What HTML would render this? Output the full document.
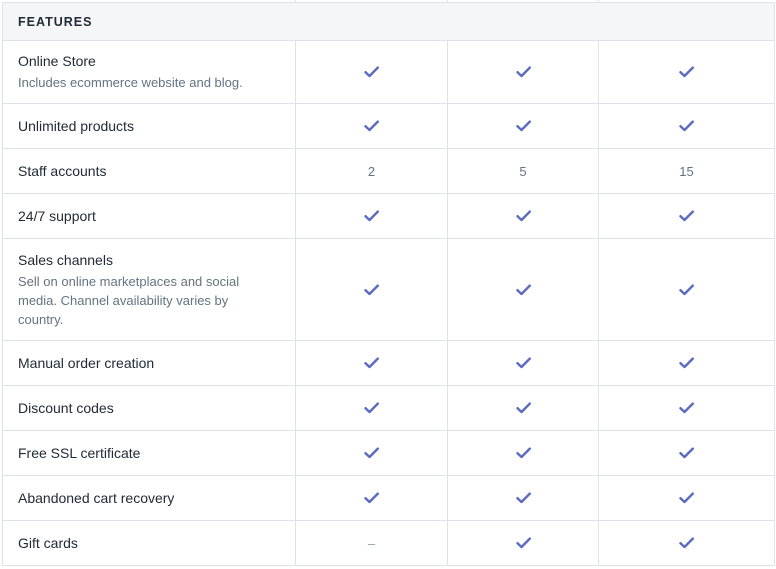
<!DOCTYPE html>
<html><head><meta charset="utf-8"><style>
*{margin:0;padding:0;box-sizing:border-box}
body{width:776px;height:569px;background:#fff;font-family:"Liberation Sans",sans-serif;overflow:hidden;position:relative}
.t{position:absolute;left:2px;top:0;width:773px;border-left:1px solid #dfe3e8;border-right:1px solid #dfe3e8}
.r{display:flex;border-bottom:1px solid #dfe3e8}
.c{display:flex;align-items:center;justify-content:center;border-left:1px solid #dfe3e8;color:#637381;font-size:13px}
.c0{width:292px;border-left:none;justify-content:flex-start;padding-left:15px;color:#212b36;font-size:14px}
.c1{width:152px}.c2{width:151px}.c3{flex:1}
.hd{background:#f4f6f8;border-top:1px solid #dfe3e8}
.hd .c0{font-weight:bold;font-size:12.5px;letter-spacing:1px;color:#212b36}
.ti{line-height:20px}
.sub{color:#637381;font-size:13px;line-height:19px;margin-top:2px;width:240px}
svg{width:15px;height:12px}
</style></head><body>
<div style="position:absolute;top:0;left:295px;width:1px;height:2px;background:#dfe3e8"></div>
<div style="position:absolute;top:0;left:447px;width:1px;height:2px;background:#dfe3e8"></div>
<div style="position:absolute;top:0;left:598px;width:1px;height:2px;background:#dfe3e8"></div>
<div class="t" style="top:2px">
<div class="r hd" style="height:39px"><div class="c c0">FEATURES</div><div class="c c1" style="border-left:none"></div><div class="c c2" style="border-left:none"></div><div class="c c3" style="border-left:none"></div></div>
</div>
<div class="t" style="top:40px">
<div class="r" style="height:64px"><div class="c c0"><div><div class="ti">Online Store</div><div class="sub">Includes ecommerce website and blog.</div></div></div><div class="c c1">✓</div><div class="c c2">✓</div><div class="c c3">✓</div></div>
<div class="r" style="height:45px"><div class="c c0">Unlimited products</div><div class="c c1">✓</div><div class="c c2">✓</div><div class="c c3">✓</div></div>
<div class="r" style="height:45px"><div class="c c0">Staff accounts</div><div class="c c1">2</div><div class="c c2">5</div><div class="c c3">15</div></div>
<div class="r" style="height:45px"><div class="c c0">24/7 support</div><div class="c c1">✓</div><div class="c c2">✓</div><div class="c c3">✓</div></div>
<div class="r" style="height:102px"><div class="c c0"><div><div class="ti">Sales channels</div><div class="sub">Sell on online marketplaces and social media. Channel availability varies by country.</div></div></div><div class="c c1">✓</div><div class="c c2">✓</div><div class="c c3">✓</div></div>
<div class="r" style="height:45px"><div class="c c0">Manual order creation</div><div class="c c1">✓</div><div class="c c2">✓</div><div class="c c3">✓</div></div>
<div class="r" style="height:45px"><div class="c c0">Discount codes</div><div class="c c1">✓</div><div class="c c2">✓</div><div class="c c3">✓</div></div>
<div class="r" style="height:45px"><div class="c c0">Free SSL certificate</div><div class="c c1">✓</div><div class="c c2">✓</div><div class="c c3">✓</div></div>
<div class="r" style="height:45px"><div class="c c0">Abandoned cart recovery</div><div class="c c1">✓</div><div class="c c2">✓</div><div class="c c3">✓</div></div>
<div class="r" style="height:45px"><div class="c c0">Gift cards</div><div class="c c1" style="color:#919eab">–</div><div class="c c2">✓</div><div class="c c3">✓</div></div>
</div>
<script>
document.querySelectorAll('.c').forEach(function(e){if(e.textContent==='✓'){e.innerHTML='<svg viewBox="0 0 15 12"><path d="M1.5 6.2 L5.5 10 L13.8 1.6" fill="none" stroke="#5c6ac4" stroke-width="2.4" stroke-linecap="round" stroke-linejoin="round"/></svg>';}});
</script>
</body></html>
